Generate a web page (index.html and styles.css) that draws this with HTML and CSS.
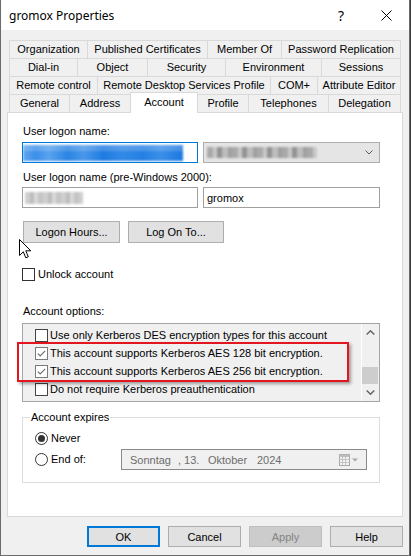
FILE: index.html
```html
<!DOCTYPE html>
<html>
<head>
<meta charset="utf-8">
<title>gromox Properties</title>
<link rel="stylesheet" href="styles.css">
</head>
<body>
<div class="window">
  <div class="titlebar">
    <span class="title">gromox Properties</span>
    <span class="capbtn help">?</span>
    <span class="capbtn close"><svg width="11" height="11" viewBox="0 0 11 11"><path d="M0.5 0.5L10.5 10.5M10.5 0.5L0.5 10.5" stroke="#000" stroke-width="1" fill="none"/></svg></span>
  </div>
  <div class="body">
    <div class="tabs">
      <div class="tabrow">
        <div class="tab t-org">Organization</div>
        <div class="tab t-pub">Published Certificates</div>
        <div class="tab t-mem">Member Of</div>
        <div class="tab t-pwd">Password Replication</div>
      </div>
      <div class="tabrow">
        <div class="tab t-dial">Dial-in</div>
        <div class="tab t-obj">Object</div>
        <div class="tab t-sec">Security</div>
        <div class="tab t-env">Environment</div>
        <div class="tab t-ses">Sessions</div>
      </div>
      <div class="tabrow">
        <div class="tab t-rc">Remote control</div>
        <div class="tab t-rds">Remote Desktop Services Profile</div>
        <div class="tab t-com">COM+</div>
        <div class="tab t-attr">Attribute Editor</div>
      </div>
      <div class="tabrow">
        <div class="tab t-gen">General</div>
        <div class="tab t-addr">Address</div>
        <div class="tab t-acc sel">Account</div>
        <div class="tab t-prof">Profile</div>
        <div class="tab t-tel">Telephones</div>
        <div class="tab t-del">Delegation</div>
      </div>
    </div>

    <div class="panel">
      <div class="label">User logon name:</div>
      <div class="fieldrow r1">
        <div class="input focused"><div class="blur-sel"></div></div>
        <div class="combo">
          <div class="blur-gray"></div>
          <svg class="chev" width="8" height="5" viewBox="0 0 8 5"><path d="M0.5 0.5L4 4L7.5 0.5" stroke="#5a5a5a" stroke-width="1" fill="none"/></svg>
        </div>
      </div>
      <div class="label l2">User logon name (pre-Windows 2000):</div>
      <div class="fieldrow r2">
        <div class="input"><div class="blur-light"></div></div>
        <div class="input wide text">gromox</div>
      </div>
      <div class="btnrow">
        <button class="btn b-hours">Logon Hours...</button>
        <button class="btn b-logon">Log On To...</button>
      </div>
      <div class="checkrow unlock">
        <span class="cb"></span><span class="cbtext">Unlock account</span>
      </div>
      <div class="label l3">Account options:</div>
      <div class="listwrap">
        <div class="listbox">
          <div class="items">
            <div class="item"><span class="cb"></span><span class="itext">Use only Kerberos DES encryption types for this account</span></div>
            <div class="item"><span class="cb checked"><svg width="11" height="11" viewBox="0 0 11 11"><path d="M1.8 5.6L4.2 8L9.2 2.8" stroke="#6f6f6f" stroke-width="1.2" fill="none"/></svg></span><span class="itext">This account supports Kerberos AES 128 bit encryption.</span></div>
            <div class="item"><span class="cb checked"><svg width="11" height="11" viewBox="0 0 11 11"><path d="M1.8 5.6L4.2 8L9.2 2.8" stroke="#6f6f6f" stroke-width="1.2" fill="none"/></svg></span><span class="itext">This account supports Kerberos AES 256 bit encryption.</span></div>
            <div class="item"><span class="cb"></span><span class="itext">Do not require Kerberos preauthentication</span></div>
          </div>
          <div class="scrollbar">
            <div class="sb-btn"><svg width="9" height="5" viewBox="0 0 9 5"><path d="M0.7 4.5L4.5 0.8L8.3 4.5" stroke="#606060" stroke-width="1.4" fill="none"/></svg></div>
            <div class="sb-track"><div class="sb-thumb"></div></div>
            <div class="sb-btn"><svg width="9" height="5" viewBox="0 0 9 5"><path d="M0.7 0.5L4.5 4.2L8.3 0.5" stroke="#606060" stroke-width="1.4" fill="none"/></svg></div>
          </div>
        </div>
        <div class="annotation"></div>
      </div>
      <fieldset class="group">
        <legend>Account expires</legend>
        <div class="radiorow">
          <span class="rb on"></span><span class="rbtext">Never</span>
        </div>
        <div class="radiorow endrow">
          <div class="radiolabel"><span class="rb"></span><span class="rbtext">End of:</span></div>
          <div class="datepicker">
            <span class="dp-day">Sonntag</span><span class="dp-num">, 13.</span><span class="dp-month">Oktober</span><span class="dp-year">2024</span>
            <span class="dp-icon">
              <svg width="20" height="12" viewBox="0 0 20 12"><rect x="0.5" y="0.5" width="10" height="11" fill="#f4f4f4" stroke="#a8a8a8"/><rect x="0.5" y="0.5" width="10" height="2.5" fill="#bdbdbd"/><path d="M3.5 3v8.5M6.5 3v8.5M0.5 5.5h10M0.5 8.5h10" stroke="#c2c2c2" stroke-width="1"/><path d="M13 4.5h6l-3 3z" fill="#a8a8a8"/></svg>
            </span>
          </div>
        </div>
      </fieldset>
      <svg class="cursor" width="13" height="20" viewBox="0 0 13 20"><path d="M0.5 0.5L0.5 16.5L4.3 12.8L6.8 18.8L9.3 17.8L6.8 11.8L11.8 11.8Z" fill="#fff" stroke="#000" stroke-width="1" stroke-linejoin="miter"/></svg>
    </div>

    <div class="dlgbuttons">
      <button class="btn dbtn ok">OK</button>
      <button class="btn dbtn">Cancel</button>
      <button class="btn dbtn disabled">Apply</button>
      <button class="btn dbtn">Help</button>
    </div>
  </div>
</div>
</body>
</html>
```

FILE: styles.css
```css
* { box-sizing: border-box; }
html, body { margin: 0; padding: 0; }
body {
  background: #3a3a3a;
  width: 411px;
  height: 556px;
  overflow: hidden;
  font-family: "Liberation Sans", Arial, sans-serif;
  font-size: 11px;
  color: #000;
}
.window {
  width: 410px;
  height: 556px;
  background: #f0f0f0;
  border: 1px solid #6b6b6b;
  border-top: none;
  display: flex;
  flex-direction: column;
}
.titlebar {
  height: 30px;
  flex: none;
  background: #fff;
  display: flex;
  align-items: center;
  padding-left: 8px;
  font-family: "Noto Sans", "Open Sans", sans-serif;
  font-size: 12px;
  color: #000;
}
.title { flex: 1; }
.capbtn {
  width: 46px;
  height: 30px;
  display: flex;
  align-items: center;
  justify-content: center;
}
.help { font-size: 14px; padding-left: 2px; }
.close svg { display: block; }

.body {
  flex: 1;
  display: flex;
  flex-direction: column;
  padding: 10px 6px 0 6px;
}

/* tabs */
.tabs { margin-left: 2px; width: 392px; }
.tabrow { display: flex; align-items: flex-start; height: 18px; }
.tab {
  flex: none;
  height: 18px;
  border: 1px solid #d9d9d9;
  border-bottom: none;
  background: #f0f0f0;
  display: flex;
  align-items: center;
  justify-content: center;
  white-space: nowrap;
  padding-bottom: 1px;
}
.tab + .tab { margin-left: -1px; }
.tab.sel {
  background: #fff;
  height: 21px;
  margin-top: -2px;
  position: relative;
  z-index: 2;
  padding-bottom: 2px;
}
.t-org { width: 79px; }
.t-pub { width: 121px; }
.t-mem { width: 75px; }
.t-pwd { width: 120px; }
.t-dial { width: 69px; }
.t-obj { width: 71px; }
.t-sec { width: 79px; }
.t-env { width: 97px; }
.t-ses { width: 80px; }
.t-rc { width: 89px; }
.t-rds { width: 174px; }
.t-com { width: 48px; }
.t-attr { width: 84px; }
.t-gen { width: 61px; }
.t-addr { width: 62px; }
.t-acc { width: 68px; }
.t-prof { width: 52px; }
.t-tel { width: 81px; }
.t-del { width: 73px; }

/* panel */
.panel {
  position: relative;
  height: 405px;
  width: 396px;
  flex: none;
  background: #fff;
  border: 1px solid #d9d9d9;
  padding: 12px 22px 0 14px;
  display: flex;
  flex-direction: column;
}
.label { line-height: 13px; height: 13px; padding-left: 1px; }
.l2 { margin-top: 8px; }
.l3 { margin-top: 24px; }
.fieldrow { display: flex; gap: 5px; height: 21px; }
.r1 { margin-top: 4px; }
.r2 { margin-top: 3px; }
.input {
  width: 176px;
  height: 21px;
  border: 1px solid #a0a0a0;
  background: #fff;
  display: flex;
  align-items: center;
  overflow: hidden;
}
.input.wide { width: 177px; }
.input.text { padding-left: 3px; }
.input.focused { border-color: #0078d7; }
.blur-sel {
  width: 160px;
  height: 16px;
  background:
    linear-gradient(180deg, rgba(255,255,255,0.18) 0 40%, rgba(255,255,255,0) 40%),
    linear-gradient(90deg, #62a8ef 0, #3a8fe8 8%, #5aa2ee 16%, #2b84e4 28%, #4a98ea 38%, #1f7be2 50%, #3389e6 62%, #2580e3 75%, #3b8fe8 86%, #1c78e0 100%);
  filter: blur(0.9px);
}
.blur-light {
  margin-left: 2px;
  width: 58px;
  height: 12px;
  background: repeating-linear-gradient(90deg, #cfcfcf 0 5px, #bdbdbd 5px 9px, #d9d9d9 9px 13px, #c4c4c4 13px 18px);
  filter: blur(1px);
}
.combo {
  width: 177px;
  height: 21px;
  border: 1px solid #adadad;
  background: #e5e5e5;
  display: flex;
  align-items: center;
  padding: 0 6px 0 3px;
}
.blur-gray {
  width: 110px;
  height: 11px;
  background: repeating-linear-gradient(90deg, #a9a9a9 0 6px, #c9c9c9 6px 10px, #939393 10px 15px, #bdbdbd 15px 21px, #a0a0a0 21px 25px);
  filter: blur(1px);
}
.chev { margin-left: auto; display: block; }

.btnrow { display: flex; gap: 8px; margin-top: 13px; padding-left: 1px; }
.btn {
  font-family: "Liberation Sans", Arial, sans-serif;
  font-size: 11px;
  color: #000;
  background: #e1e1e1;
  border: 1px solid #adadad;
  padding: 0;
  margin: 0;
  border-radius: 0;
  display: flex;
  align-items: center;
  justify-content: center;
}
.b-hours { width: 97px; height: 22px; }
.b-logon { width: 96px; height: 22px; }

.checkrow { display: flex; align-items: center; height: 13px; }
.unlock { margin-top: 25px; }
.cb {
  width: 13px;
  height: 13px;
  flex: none;
  border: 1px solid #333;
  background: #fff;
  display: flex;
  align-items: center;
  justify-content: center;
}
.cb svg { display: block; }
.cb.checked { border-color: #7a7a7a; }
.cbtext { margin-left: 3px; line-height: 13px; }

.listwrap { position: relative; margin-top: 5px; }
.listbox {
  height: 79px;
  border: 1px solid #a5a5a5;
  background: #f0f0f0;
  display: flex;
}
.items { flex: 1; padding: 2px 0 0 12px; }
.item { height: 18px; display: flex; align-items: center; }
.item .cb { border-color: #444; }
.item .cb.checked { border-color: #7a7a7a; }
.itext { margin-left: 2px; white-space: nowrap; }
.scrollbar {
  width: 18px;
  flex: none;
  border-left: 1px solid #fff;
  display: flex;
  flex-direction: column;
}
.sb-btn { height: 17px; display: flex; align-items: center; justify-content: center; }
.sb-btn svg { display: block; }
.sb-track { flex: 1; padding-top: 26px; }
.sb-thumb { height: 17px; margin: 0 0 0 0; width: 16px; background: #cdcdcd; }
.annotation {
  position: absolute;
  left: -5px;
  top: 19px;
  width: 332px;
  height: 40px;
  border: 2px solid #e3161f;
  box-shadow: 2px 2px 3px rgba(0, 0, 0, 0.35);
  pointer-events: none;
}

.group {
  margin: 9px 0 0 0;
  width: 358px;
  min-width: 0;
  border: 1px solid #dcdcdc;
  padding: 8px 12px 12px 12px;
}
.group legend {
  margin-left: -5px;
  padding: 0 1px;
  line-height: 13px;
  height: 13px;
}
.radiorow { display: flex; align-items: center; height: 13px; }
.endrow { margin-top: 4px; height: 21px; }
.radiolabel { width: 86px; flex: none; display: flex; align-items: center; }
.rb {
  width: 13px;
  height: 13px;
  flex: none;
  border: 1px solid #333;
  border-radius: 50%;
  background: #fff;
  display: flex;
  align-items: center;
  justify-content: center;
}
.rb.on::after {
  content: "";
  width: 7px;
  height: 7px;
  border-radius: 50%;
  background: #333;
}
.rbtext { margin-left: 3px; line-height: 13px; }
.datepicker {
  width: 246px;
  height: 21px;
  border: 1px solid #8a8a8a;
  background: #f0f0f0;
  color: #6d6d6d;
  display: flex;
  align-items: center;
  padding: 0 7px 0 8px;
  white-space: pre;
}
.dp-day { width: 48px; }
.dp-num { width: 30px; }
.dp-month { width: 49px; }
.dp-year { width: 40px; }
.dp-icon { margin-left: auto; display: flex; }
.dp-icon svg { display: block; }

.cursor { position: absolute; left: 11px; top: 126px; }

.dlgbuttons {
  display: flex;
  justify-content: flex-end;
  gap: 8px;
  margin-top: 9px;
}
.dbtn { width: 73px; height: 21px; }
.dbtn.ok { border: 2px solid #0078d7; }
.dbtn.disabled { background: #cccccc; border-color: #bfbfbf; color: #838383; }
```
